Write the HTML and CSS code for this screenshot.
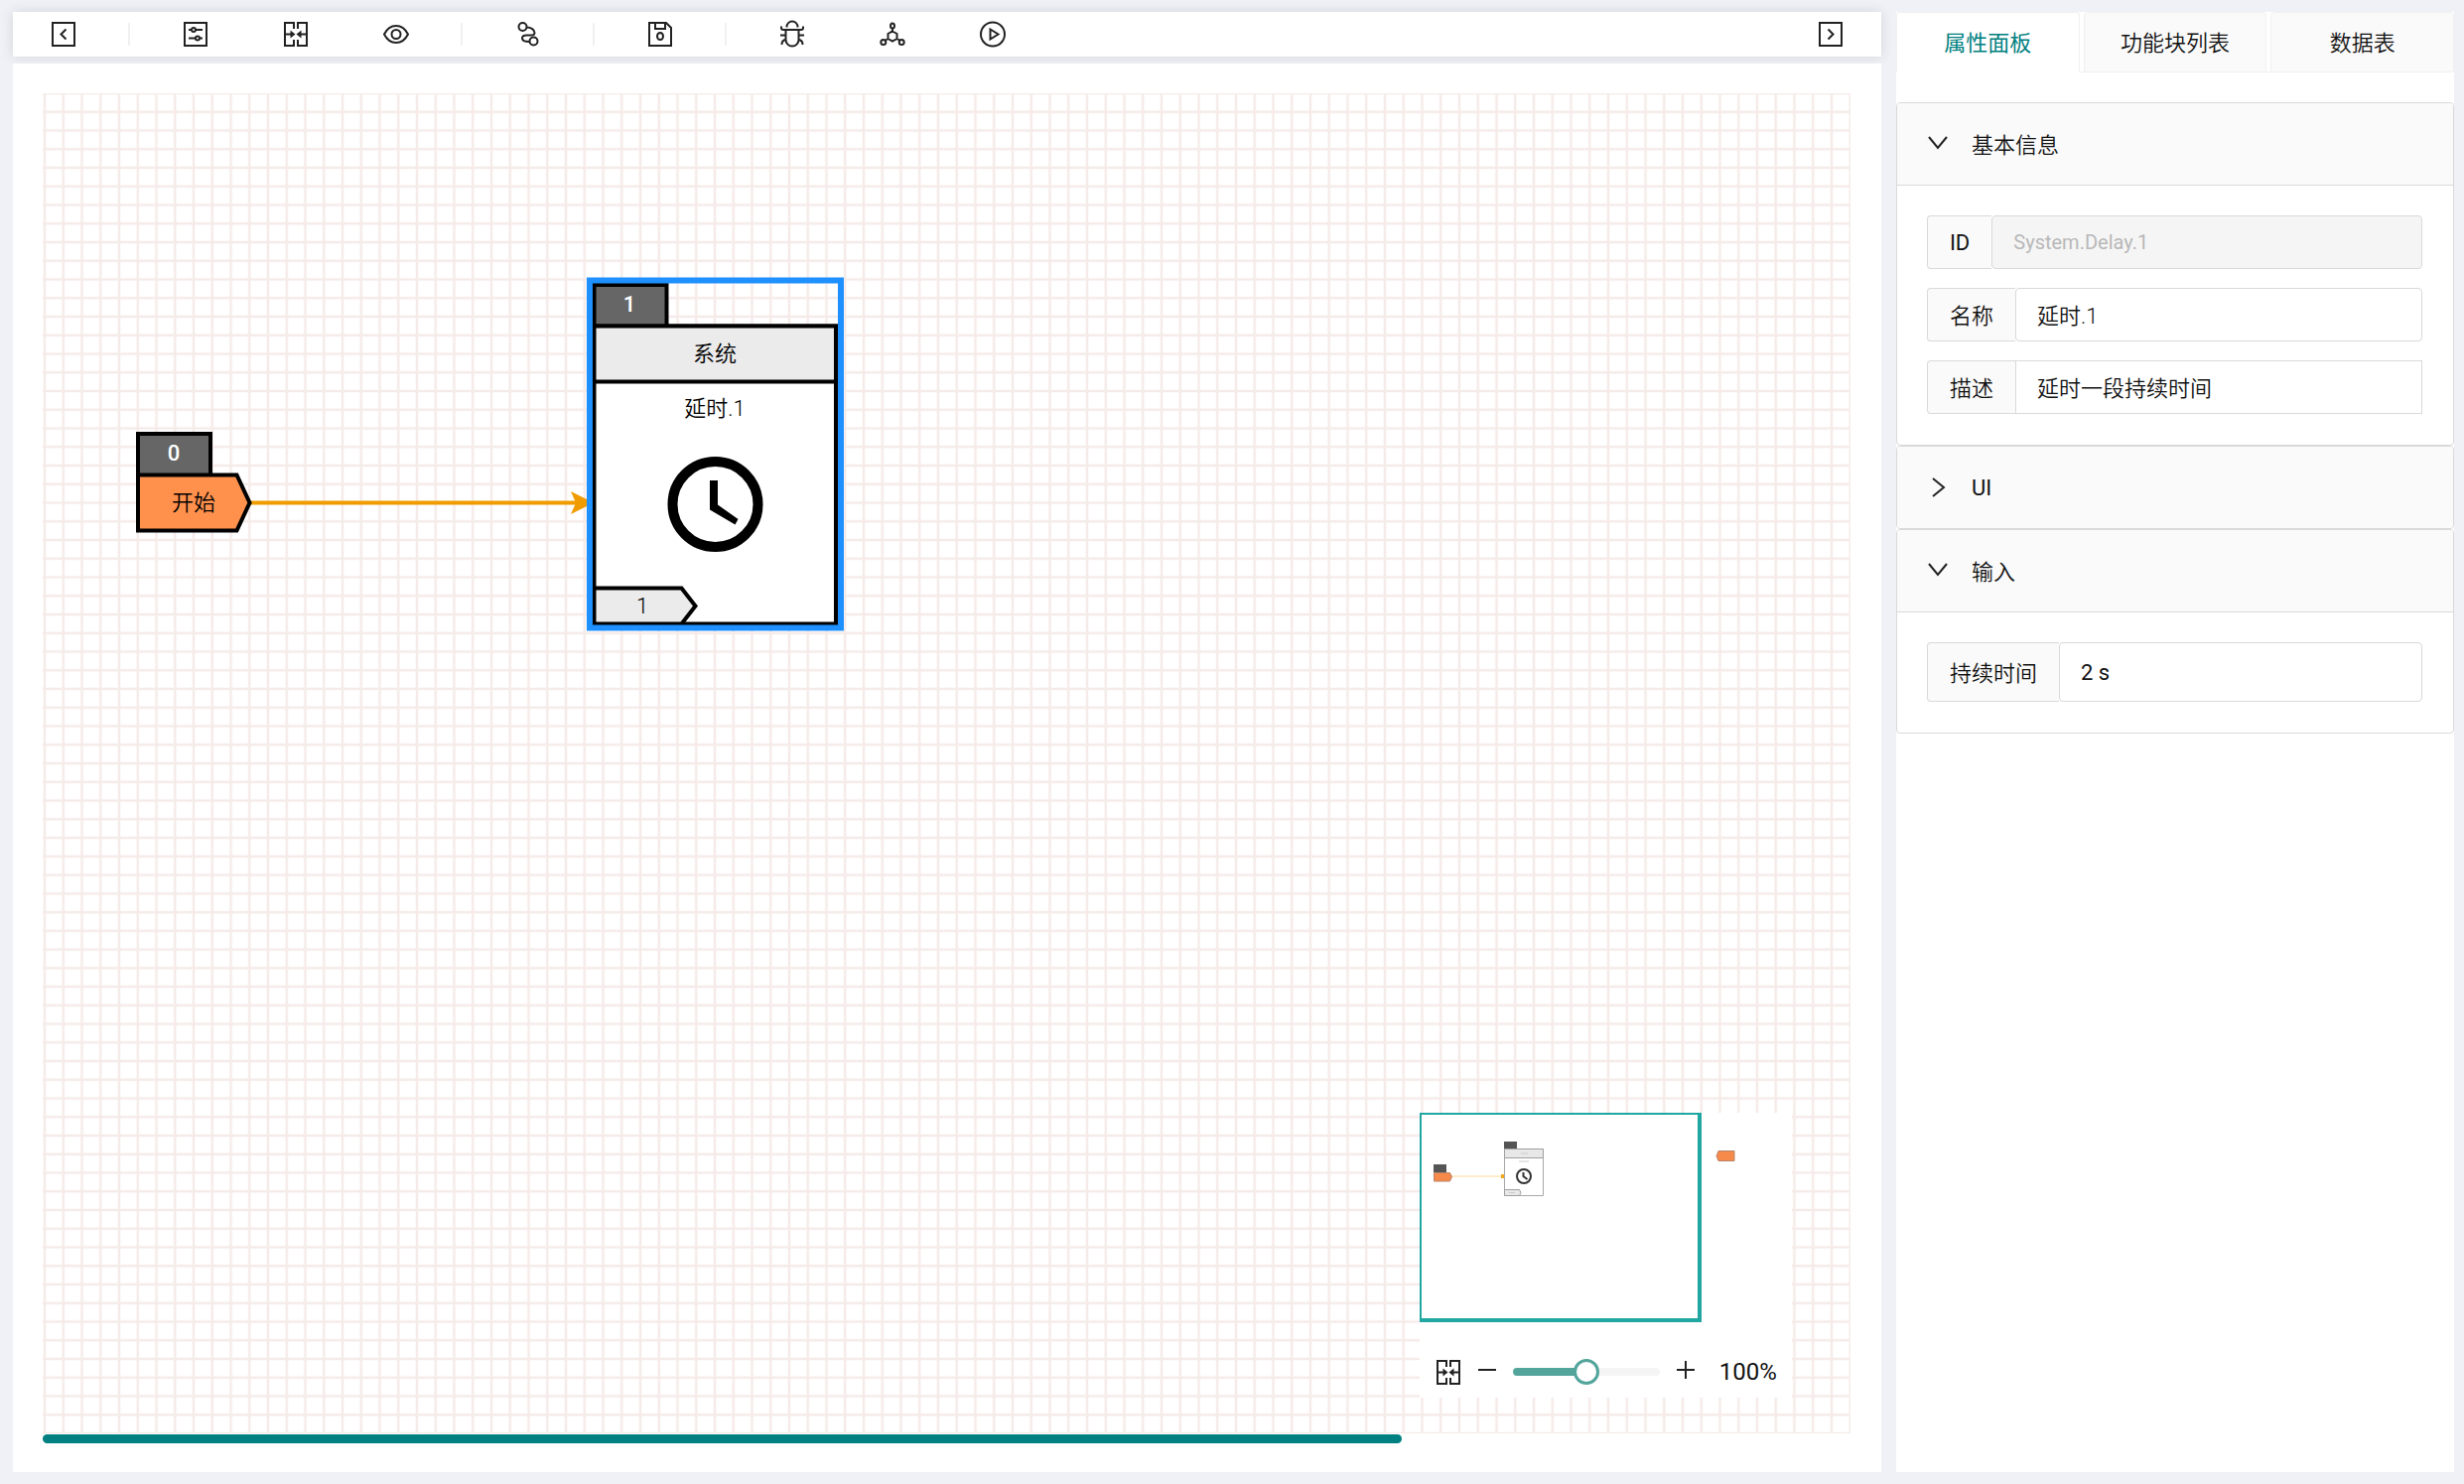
FILE: index.html
```html
<!DOCTYPE html>
<html lang="zh-CN">
<head>
    <meta charset="UTF-8">
    <meta name="viewport" content="width=device-width, initial-scale=1.0">
    <title>流程编辑器</title>
    <link rel="stylesheet" href="styles.css">
</head>
<body>

    <!-- Shared icons -->
    <svg class="sprite" aria-hidden="true">
        <symbol id="icon-fit" viewBox="0 0 30 30">
            <path d="M13 10V4H4v23h9v-6M17 10V4h9v23h-9v-6M4 15.500h6M26 15.500h-6"/>
            <path class="solid" d="M9.500 11.500l5 4-5 4zM20.500 11.500l-5 4 5 4z"/>
        </symbol>
        <symbol id="icon-down" viewBox="0 0 20 20">
            <path d="M1 4l9 11 9-11"/>
        </symbol>
        <symbol id="icon-right" viewBox="0 0 20 20">
            <path d="M5 1l11 9-11 9"/>
        </symbol>
    </svg>

    <div class="page">
        <main class="editor">
            <div class="toolbar">
                <button type="button" class="tool" aria-label="收起左侧">
                    <svg class="icon" viewBox="0 0 30 30"><path d="M4 4h22v23H4zM17.500 10.500l-5 5 5 5"/></svg>
                </button>
                <span class="divider"></span>
                <button type="button" class="tool" aria-label="设置">
                    <svg class="icon" viewBox="0 0 30 30">
                        <path d="M4 4h22v23H4zM8 11h3M15 11h7M8 19.500h7M19 19.500h3"/>
                        <circle cx="13" cy="11" r="2"/><circle cx="17" cy="19.500" r="2"/>
                    </svg>
                </button>
                <button type="button" class="tool" aria-label="适应画布">
                    <svg class="icon"><use href="#icon-fit"/></svg>
                </button>
                <button type="button" class="tool" aria-label="预览">
                    <svg class="icon" viewBox="0 0 30 30">
                        <path d="M3 15.500C6 9.500 10 7 15 7s9 2.500 12 8.500C24 21.500 20 24 15 24S6 21.500 3 15.500z"/>
                        <circle cx="15" cy="15.500" r="4.500"/>
                    </svg>
                </button>
                <span class="divider"></span>
                <button type="button" class="tool" aria-label="连线">
                    <svg class="icon" viewBox="0 0 30 30">
                        <circle cx="9.500" cy="8" r="4"/><circle cx="20.500" cy="22.500" r="4"/>
                        <path d="M13.500 8.500C18 8.500 21.500 11 21.500 14c0 2-2 2.500-4 2.500h-4c-3 0-4.500 1-4.500 3 0 3 3 3.500 7.500 3.500"/>
                    </svg>
                </button>
                <span class="divider"></span>
                <button type="button" class="tool" aria-label="保存">
                    <svg class="icon" viewBox="0 0 30 30">
                        <path d="M4 4h17l5 5v18H4zM10 4v6h10V4"/>
                        <ellipse cx="15" cy="17.500" rx="3" ry="3.500"/>
                    </svg>
                </button>
                <span class="divider"></span>
                <button type="button" class="tool" aria-label="调试">
                    <svg class="icon" viewBox="0 0 30 30">
                        <path d="M9.500 8.500V8a5 5 0 0 1 11 0v.5M4 7.500v1.500q0 2 2 2h18q2 0 2-2V7.500M8.500 11.500V21a6.500 6.500 0 0 0 13 0v-9.500M3 16.500h5.500M21.500 16.500H27M8.500 21Q4.500 21.500 4.500 26M21.500 21q4 .5 4 5"/>
                    </svg>
                </button>
                <button type="button" class="tool" aria-label="节点">
                    <svg class="icon" viewBox="0 0 30 30">
                        <path d="M15 12.500l4.500 2.500v5L15 22.500 10.500 20v-5zM15 9v3.500M10.500 20L8 21.500M19.500 20l2.500 1.500"/>
                        <ellipse cx="15" cy="7" rx="2" ry="2.500"/><circle cx="5.800" cy="23.500" r="2.500"/><circle cx="24.200" cy="23.500" r="2.500"/>
                    </svg>
                </button>
                <button type="button" class="tool" aria-label="运行">
                    <svg class="icon" viewBox="0 0 30 30">
                        <circle cx="15" cy="15.500" r="12"/><path d="M12.500 10.500v10l8-5z"/>
                    </svg>
                </button>
                <button type="button" class="tool tool-end" aria-label="收起右侧">
                    <svg class="icon" viewBox="0 0 30 30"><path d="M4 4h22v23H4zM12.500 10.500l5 5-5 5"/></svg>
                </button>
            </div>

            <section class="canvas">
                <div class="stage">
                    <svg class="diagram">
                        <defs>
                            <pattern id="grid" x="1.600" y="0" width="15" height="15" patternUnits="userSpaceOnUse" patternTransform="scale(1.25)">
                                <path class="grid-line" d="M0 0H15M0 15H15M0 0V15M15 0V15"/>
                            </pattern>
                        </defs>
                        <rect width="100%" height="100%" fill="url(#grid)"/>

                        <!-- Connection -->
                        <path class="link" d="M208 412.500H540"/>
                        <path class="link-head" d="M532 401l23 11.500-23 11.500 5-11.500z"/>

                        <!-- Start node -->
                        <path class="shape index" d="M96 343h73v42H96z"/>
                        <path class="shape start" d="M96 384.500h99.500l13 28-13 28H96z"/>
                        <text class="node-index" x="132" y="370">0</text>
                        <text class="node-text" x="152" y="420">开始</text>

                        <!-- Delay node -->
                        <path class="shape index" d="M555.500 193h73v42h-73z"/>
                        <path class="shape body" d="M555.500 234.500H799v300H555.500z"/>
                        <path class="shape head" d="M555.500 234.500H799v56H555.500z"/>
                        <path class="shape port" d="M555.500 498.500h88l14 18-14 18h-88z"/>
                        <text class="node-index" x="591" y="220">1</text>
                        <text class="node-text" x="677" y="270">系统</text>
                        <text class="node-text" x="677" y="325">延时.1</text>
                        <text class="node-text" x="604" y="524">1</text>
                        <circle class="clock" cx="677.500" cy="414" r="43"/>
                        <path d="M672 390h8v24.500l20.500 14.500-3 5.500L672 419.500z"/>
                        <rect class="selection" x="551" y="188.500" width="253" height="350"/>
                    </svg>

                    <div class="minimap">
                        <svg class="minimap-view" viewBox="0 0 375 223">
                            <path class="mini-link" d="M32 64h52"/>
                            <path class="mini-dot" d="M82 62h3v4h-3z"/>
                            <path class="mini-index" d="M14 52h13v8H14zM85 29h13v8H85z"/>
                            <path class="mini-end" d="M14.500 60.500h16l2 4-2 4.500h-16zM317 38.500h-16l-2 5 2 5h16z"/>
                            <path class="mini-box" d="M85.500 36.500h39v47h-39z"/>
                            <path class="mini-head" d="M85.500 36.500h39v9h-39zM85.500 77.500h15l1.500 3-1.500 3h-15z"/>
                            <path class="mini-text" d="M102 41h7M100 49h10M90 80.500h6"/>
                            <circle class="mini-clock" cx="105" cy="64" r="7"/>
                            <path class="mini-clock" d="M104.500 60v4l4 3"/>
                            <path class="mini-frame" d="M0 0h284v211H0zM2 2v205h278V2z"/>
                        </svg>
                        <div class="zoom-bar">
                            <button type="button" class="zoom-fit" aria-label="适应画布">
                                <svg class="icon"><use href="#icon-fit"/></svg>
                            </button>
                            <button type="button" class="zoom-step" aria-label="缩小">
                                <svg viewBox="0 0 20 20"><path d="M1 10h18"/></svg>
                            </button>
                            <input type="range" class="zoom-range" min="0" max="200" value="100" aria-label="缩放">
                            <button type="button" class="zoom-step" aria-label="放大">
                                <svg viewBox="0 0 20 20"><path d="M1 10h18M10 1v18"/></svg>
                            </button>
                            <output class="zoom-value">100%</output>
                        </div>
                    </div>
                </div>
                <div class="scrollbar"></div>
            </section>
        </main>

        <aside class="sidebar">
            <div class="tabs" role="tablist">
                <button type="button" class="tab active" role="tab" aria-selected="true">属性面板</button>
                <button type="button" class="tab" role="tab" aria-selected="false">功能块列表</button>
                <button type="button" class="tab" role="tab" aria-selected="false">数据表</button>
            </div>

            <section class="panel">
                <button type="button" class="panel-header" aria-expanded="true">
                    <svg class="chevron"><use href="#icon-down"/></svg>基本信息
                </button>
                <div class="panel-body">
                    <div class="field">
                        <label for="block-id" class="latin">ID</label>
                        <input type="text" id="block-id" value="System.Delay.1" disabled>
                    </div>
                    <div class="field">
                        <label for="block-name">名称</label>
                        <input type="text" id="block-name" value="延时.1">
                    </div>
                    <div class="field">
                        <label for="block-desc">描述</label>
                        <input type="text" id="block-desc" class="square" value="延时一段持续时间">
                    </div>
                </div>
            </section>

            <section class="panel">
                <button type="button" class="panel-header latin" aria-expanded="false">
                    <svg class="chevron"><use href="#icon-right"/></svg>UI
                </button>
            </section>

            <section class="panel">
                <button type="button" class="panel-header" aria-expanded="true">
                    <svg class="chevron"><use href="#icon-down"/></svg>输入
                </button>
                <div class="panel-body">
                    <div class="field field-large">
                        <label for="duration">持续时间</label>
                        <input type="text" id="duration" class="latin" value="2 s">
                    </div>
                </div>
            </section>
        </aside>
    </div>

</body>
</html>
```

FILE: styles.css
```css
* {
    box-sizing: border-box;
}

body {
    margin: 0;
    font-family: Roboto, "Noto Sans CJK SC", sans-serif;
    font-size: 22px;
    color: #111111;
    background-color: #f0f1f6;
}

button,
input {
    font: inherit;
    color: inherit;
    margin: 0;
}

button {
    padding: 0;
    border: none;
    background: none;
    cursor: pointer;
}

svg {
    display: block;
    fill: none;
    stroke: #222222;
    stroke-width: 2;
}

.solid {
    fill: #222222;
    stroke: none;
}

.sprite {
    position: absolute;
    width: 0;
    height: 0;
}

.page {
    display: grid;
    grid-template-columns: minmax(0, 77fr) minmax(0, 23fr);
    gap: 15px;
    min-height: 100vh;
    padding: 12px 10px 12px 13px;
}

.editor {
    display: flex;
    flex-direction: column;
    gap: 7px;
}

/* Toolbar */
.toolbar {
    display: flex;
    align-items: center;
    height: 45px;
    padding-bottom: 1px;
    background-color: #ffffff;
    box-shadow: 0 0 12px rgba(0, 0, 0, 0.12);
}

.tool {
    display: flex;
    justify-content: center;
    width: 101px;
}

.tool-end {
    margin-left: auto;
}

.icon {
    width: 30px;
    height: 30px;
}

.divider {
    width: 2px;
    height: 23px;
    margin: 0 15px;
    background-color: #f0f0f0;
}

/* Canvas */
.canvas {
    flex: 1;
    display: flex;
    flex-direction: column;
    gap: 1px;
    padding: 30px 31px 29px 30px;
    background-color: #ffffff;
    z-index: 1;
}

.stage {
    position: relative;
    flex: 1;
    min-height: 700px;
}

.diagram {
    position: absolute;
    width: 100%;
    height: 100%;
    stroke: none;
    fill: #000000;
}

.grid-line {
    stroke: #f5ebe9;
    stroke-width: 2;
}

.link {
    stroke: #f09c00;
    stroke-width: 4;
}

.link-head {
    fill: #f09c00;
}

.shape {
    stroke: #000000;
    stroke-width: 4;
}

.index {
    fill: #666666;
}

.start {
    fill: #ff914d;
}

.body {
    fill: #ffffff;
}

.head,
.port {
    fill: #ebebeb;
}

.clock {
    fill: none;
    stroke: #000000;
    stroke-width: 10;
}

.selection {
    fill: none;
    stroke: #1e90ff;
    stroke-width: 6;
}

.node-text,
.node-index {
    font-size: 22px;
    text-anchor: middle;
}

.node-text {
    fill: #000000;
    font-weight: 350;
}

.node-index {
    fill: #ffffff;
    font-weight: 500;
}

.scrollbar {
    width: 75.2%;
    height: 9px;
    border-radius: 5px;
    background-color: #008080;
}

/* Minimap */
.minimap {
    position: absolute;
    right: 59px;
    bottom: 36px;
    width: 375px;
    background-color: #ffffff;
}

.minimap-view {
    width: 100%;
}

.mini-link {
    stroke: #fdeccb;
}

.mini-dot {
    fill: #f0a820;
    stroke: none;
}

.mini-index {
    fill: #555555;
    stroke: none;
}

.mini-end {
    fill: #f58a4a;
    stroke: #b98468;
    stroke-width: 1;
}

.mini-box {
    fill: #ffffff;
    stroke: #a8a8a8;
    stroke-width: 1;
}

.mini-head {
    fill: #e8e8e8;
    stroke: #a0a0a0;
    stroke-width: 1;
}

.mini-text {
    stroke: #cccccc;
    stroke-width: 1;
}

.mini-clock {
    stroke: #333333;
    stroke-width: 2;
}

.mini-frame {
    fill: #22a6a2;
    fill-rule: evenodd;
    stroke: none;
}

.zoom-bar {
    display: flex;
    align-items: center;
    height: 64px;
    padding: 12px 15px 0 14px;
}

.zoom-step {
    margin: 0 14px 5px;
}

.zoom-step svg {
    width: 20px;
    height: 20px;
}

.zoom-range {
    appearance: none;
    flex: 1;
    min-width: 0;
    height: 26px;
    margin: 0 2px;
    background: none;
}

.zoom-range::-webkit-slider-runnable-track {
    height: 8px;
    border-radius: 4px;
    background: linear-gradient(to right, #53a59c 50%, #f5f5f5 50%);
}

.zoom-range::-webkit-slider-thumb {
    appearance: none;
    width: 26px;
    height: 26px;
    margin-top: -9px;
    border: 3px solid #53a59c;
    border-radius: 50%;
    background-color: #ffffff;
}

.zoom-value {
    margin-left: 10px;
    font-size: 24px;
}

/* Sidebar */
.sidebar {
    background-color: #ffffff;
}

.tabs {
    display: flex;
    gap: 4px;
    margin-bottom: 30px;
    background: linear-gradient(#f0f0f0, #f0f0f0) bottom / 100% 1px no-repeat;
}

.tab {
    flex: 1;
    height: 61px;
    padding-bottom: 4px;
    border: 1px solid #f0f0f0;
    border-radius: 4px 4px 0 0;
    font-weight: 350;
    background-color: #fafafa;
}

.tab.active {
    color: #008080;
    font-weight: 400;
    border-bottom-color: #ffffff;
    background-color: #ffffff;
}

.panel {
    border: 1px solid #d9d9d9;
    border-radius: 4px;
    overflow: hidden;
}

.panel-header {
    display: flex;
    align-items: center;
    gap: 24px;
    width: 100%;
    height: 82px;
    padding: 0 31px 3px;
    font-weight: 350;
    background-color: #fafafa;
}

.chevron {
    width: 20px;
    height: 20px;
}

.panel-body {
    display: flex;
    flex-direction: column;
    gap: 19px;
    padding: 30px 31px 31px 30px;
    border-top: 1px solid #d9d9d9;
}

/* Labelled inputs */
.field {
    display: flex;
    height: 54px;
}

.field-large {
    height: 60px;
}

.field label {
    display: flex;
    align-items: center;
    padding: 0 22px 3px;
    border: 1px solid #d9d9d9;
    border-right: none;
    border-radius: 4px 0 0 4px;
    font-weight: 350;
    background-color: #fafafa;
}

.field input {
    flex: 1;
    min-width: 0;
    padding: 0 21px 3px;
    border: 1px solid #d9d9d9;
    border-radius: 4px;
    font-weight: 350;
    background-color: #ffffff;
}

.field input.square {
    border-radius: 0;
}

.field input:disabled {
    padding-bottom: 0;
    color: #b8b8b8;
    font-size: 20px;
    font-weight: 400;
    background-color: #f5f5f5;
}

.panel-header.latin,
.field .latin {
    padding-bottom: 0;
    font-weight: 400;
}
```
